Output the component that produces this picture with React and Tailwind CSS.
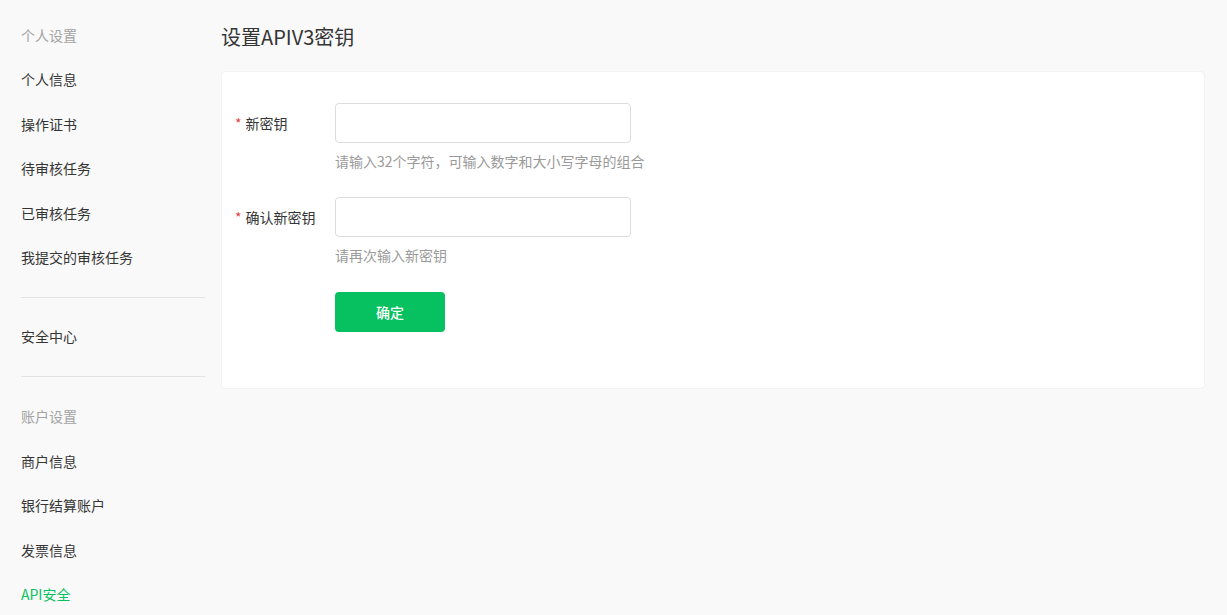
const font = { fontFamily: '"Noto Sans CJK SC", "Noto Sans", sans-serif' };

const sections = [
  {
    title: "个人设置",
    items: ["个人信息", "操作证书", "待审核任务", "已审核任务", "我提交的审核任务"],
  },
  { items: ["安全中心"], divider: "mt-[16.5px] mb-[16.5px]" },
  {
    title: "账户设置",
    items: ["商户信息", "银行结算账户", "发票信息", "API安全"],
    active: "API安全",
    divider: "mt-[17.5px] mb-[17.5px]",
  },
];

function Sidebar() {
  return (
    <aside className="w-[205px] shrink-0 pl-[21px] pt-[13px]">
      {sections.map((s, i) => (
        <div key={i}>
          {s.divider && <div className={"h-px bg-[#e2e2e2] " + s.divider} />}
          {s.title && (
            <div className="flex h-[44.5px] items-center text-[14px] text-[#a3a3a3]">
              {s.title}
            </div>
          )}
          {s.items.map((item) => (
            <div
              key={item}
              className={
                "flex h-[44.5px] items-center text-[14px] " +
                (item === s.active ? "text-[#07c160]" : "text-[#353535]")
              }
            >
              {item}
            </div>
          ))}
        </div>
      ))}
    </aside>
  );
}

function Field({ label, hint }) {
  return (
    <div className="flex">
      <div className="flex h-[40px] w-[100px] shrink-0 items-center text-[14px] text-[#353535]">
        <span className="mr-[4px] text-[#e64340]">*</span>
        {label}
      </div>
      <div>
        <input className="block h-[40px] w-[296px] rounded-[4px] border border-[#dcdcdc] bg-white px-3 text-[14px] outline-none" />
        <div className="mt-[8px] text-[14px] leading-[20px] text-[#9a9a9a]">{hint}</div>
      </div>
    </div>
  );
}

export default function App() {
  return (
    <div className="flex min-h-[615px] bg-[#f9f9f9]" style={font}>
      <Sidebar />
      <main className="ml-[16px] mr-[22px] flex-1 pt-[23px]">
        <h1 className="mb-[20px] text-[20px] leading-[28px] text-[#353535]">设置APIV3密钥</h1>
        <div className="rounded-[4px] border border-[#f2f2f2] bg-white pb-[56px] pl-[13px] pt-[31px]">
          <div className="flex flex-col gap-[26px]">
            <Field label="新密钥" hint="请输入32个字符，可输入数字和大小写字母的组合" />
            <Field label="确认新密钥" hint="请再次输入新密钥" />
            <div className="mt-px pl-[100px]">
              <button className="h-[40px] w-[110px] rounded-[4px] bg-[#07c160] text-[14px] font-medium text-white">
                确定
              </button>
            </div>
          </div>
        </div>
      </main>
    </div>
  );
}
